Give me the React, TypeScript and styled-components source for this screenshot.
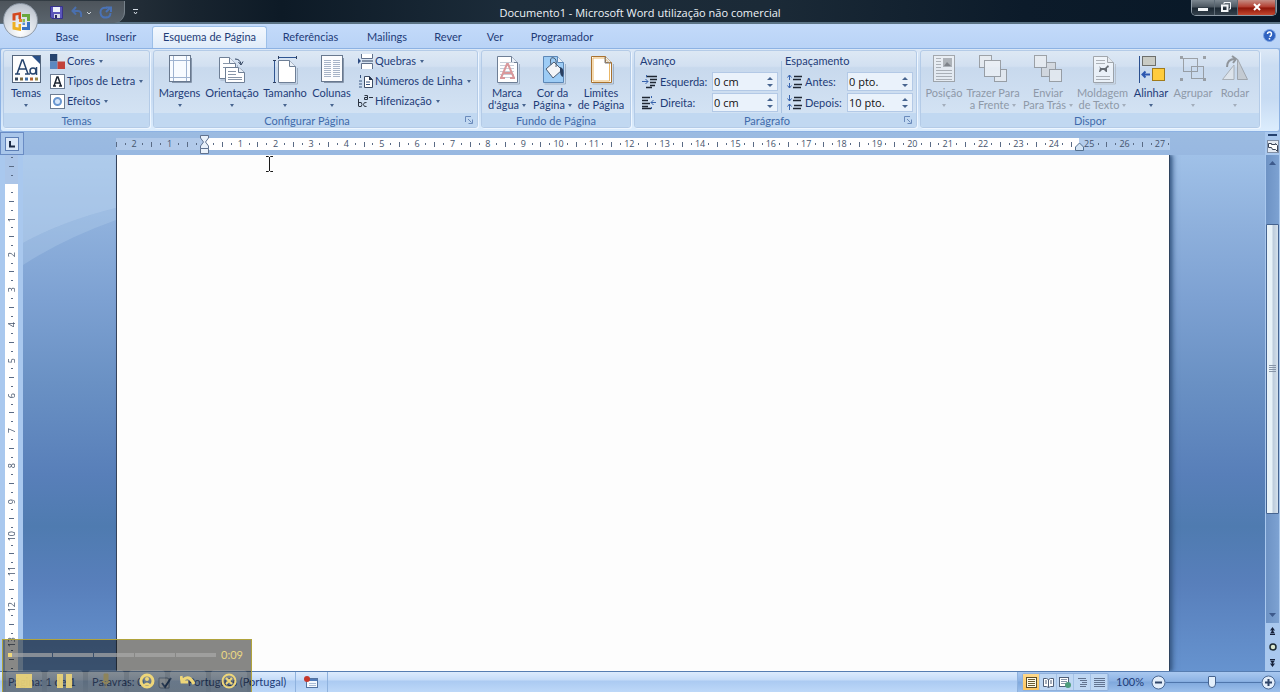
import React from "react";
import styled, { createGlobalStyle, css } from "styled-components";

const Global = createGlobalStyle`
  *, *::before, *::after { box-sizing: border-box; }
  body { margin: 0; font-family: Lato, "Open Sans", sans-serif; font-size: 11px; line-height: 14px; color: #1e3c78; }
  button, input { font: inherit; color: inherit; }
  button { border: 0; padding: 0; background: none; white-space: nowrap; }
  svg { display: block; flex: none; }
`;

const Shell = styled.div`
  position: relative;
  display: flex;
  flex-direction: column;
  height: 100vh;
  min-height: 400px;
  overflow: hidden;
  background: #9cbbe2;
`;

/* ---------- title bar ---------- */
const TitleBar = styled.header`
  flex: none;
  display: grid;
  grid-template-columns: 1fr auto 1fr;
  height: 24px;
  background: linear-gradient(90deg, #3b434a 0, #18242f 15%, #0d1a26 22%, #1c2c3a 40%, #1b2a37 60%, #0c1b2a 80%, #081827);
  border-bottom: 2px solid #5b7385;
`;
const TitleLeft = styled.div`
  display: flex;
  align-items: center;
  gap: 8px;
`;
const QuickBar = styled.div`
  display: flex;
  align-items: center;
  gap: 6px;
  width: 125px;
  height: 22px;
  padding-left: 50px;
  border-radius: 0 0 11px 0;
  background: linear-gradient(#4d545b, #5a646d);
  border-right: 1px solid #77828b;
`;
const Title = styled.h1`
  margin: 0;
  padding-top: 2px;
  font-family: "Open Sans", "Noto Sans", sans-serif;
  font-size: 11px;
  line-height: 22px;
  font-weight: 400;
  color: #eef3f8;
  white-space: nowrap;
`;
const WindowButtons = styled.div`
  justify-self: end;
  display: flex;
  height: 16px;
  margin-right: 3px;
  border: 1px solid #8e9ba6;
  border-top: 0;
  border-radius: 0 0 5px 5px;
  overflow: hidden;
`;
const WindowButton = styled.button<{ $close?: boolean }>`
  display: flex;
  align-items: center;
  justify-content: center;
  width: ${(p) => (p.$close ? 38 : 23)}px;
  padding-bottom: 2px;
  border-right: 1px solid #5d6a75;
  background: ${(p) =>
    p.$close
      ? "linear-gradient(#c58d84, #b23a2c 48%, #8c1408 52%, #c4482f)"
      : "linear-gradient(#7c8790, #4a555f 48%, #1b2732 52%, #35424d)"};
`;
const OfficeButton = styled.button`
  position: absolute;
  left: 3px;
  top: 3px;
  z-index: 2;
  display: flex;
  align-items: center;
  justify-content: center;
  width: 35px;
  height: 35px;
  border-radius: 50%;
  border: 1px solid #8d98a5;
  background: radial-gradient(circle at 50% 85%, #ffffff, #d4dae2 55%, #aab2bd);
`;

/* ---------- tabs ---------- */
const TabRow = styled.nav`
  flex: none;
  display: flex;
  align-items: flex-end;
  height: 24px;
  padding-left: 40px;
  background: linear-gradient(#c3dafa, #b9d3f6);
`;
const Tab = styled.button<{ $w: number; $active?: boolean }>`
  width: ${(p) => p.$w}px;
  height: 22px;
  padding-bottom: 1px;
  ${(p) =>
    p.$active &&
    css`
      margin-left: 4px;
      margin-right: 1px;
      border: 1px solid #9cbfe8;
      border-bottom: 0;
      border-radius: 3px 3px 0 0;
      background: linear-gradient(#f3f8fe, #dfebf9);
    `}
`;
const HelpButton = styled.button`
  margin: 0 4px 6px auto;
`;

/* ---------- ribbon ---------- */
const Ribbon = styled.div`
  flex: none;
  display: flex;
  gap: 3px;
  height: 84px;
  padding: 1px 2px 3px;
  border: 1px solid #8db2e3;
  border-radius: 3px;
  background: linear-gradient(#dce8f6 0, #cbddf2 20%, #c7dbf3 60%, #dcedfd);
`;
const GroupBox = styled.section<{ $w: number }>`
  flex: none;
  display: flex;
  flex-direction: column;
  width: ${(p) => p.$w}px;
  border: 1px solid #b4cbe7;
  border-radius: 3px;
  box-shadow: 1px 1px 0 #eef6ff;
  background: linear-gradient(#dde8f4 0, #d2e0f1 20%, #c8d9ed 22%, #d6e5f5);
  overflow: hidden;
`;
const GroupBody = styled.div`
  flex: 1;
  display: flex;
  min-height: 0;
  padding: 0 2px;
`;
const GroupTitle = styled.h2<{ $launcher?: boolean }>`
  position: relative;
  flex: none;
  margin: 0;
  height: 14px;
  padding-right: ${(p) => (p.$launcher ? 17 : 0)}px;
  font-size: 11px;
  line-height: 15px;
  font-weight: 400;
  text-align: center;
  color: #3f6bab;
  background: #c1d8f1;
`;
const Launcher = styled.button`
  position: absolute;
  right: 4px;
  top: 3px;
`;
const BigBtn = styled.button<{ $w: number; $off?: boolean }>`
  display: flex;
  flex-direction: column;
  align-items: center;
  width: ${(p) => p.$w}px;
  color: ${(p) => (p.$off ? "#8e99a8" : "inherit")};
  line-height: 12px;
`;
const IconBox = styled.span<{ $off?: boolean }>`
  display: block;
  margin: 2px 0;
  filter: ${(p) => (p.$off ? "grayscale(1)" : "none")};
  opacity: ${(p) => (p.$off ? 0.6 : 1)};
`;
const BtnLine = styled.span`
  display: flex;
  align-items: center;
  justify-content: center;
  gap: 3px;
  height: 12px;
`;
const SmallList = styled.div`
  display: flex;
  flex-direction: column;
  padding-left: 4px;
`;
const SmallBtn = styled.button`
  display: flex;
  align-items: center;
  gap: 2px;
  height: 20px;
`;
const Arrow = styled.i<{ $off?: boolean; $up?: boolean }>`
  flex: none;
  width: 0;
  height: 0;
  border: 2px solid transparent;
  ${(p) => (p.$up ? "border-bottom" : "border-top")}: 3px solid ${(p) => (p.$off ? "#a3aebc" : "#47648f")};
  ${(p) => (p.$up ? "border-top" : "border-bottom")}: 0;
`;
const SmallArrow = styled(Arrow)`
  margin-left: 2px;
`;
const FieldSet = styled.fieldset<{ $w: number; $line?: boolean }>`
  flex: none;
  width: ${(p) => p.$w}px;
  margin: 0 ${(p) => (p.$line ? 0 : 2)}px 0 0;
  padding: 0 1px 0 3px;
  border: 0;
  border-left: ${(p) => (p.$line ? "1px solid #a9c2e0" : "0")};
`;
const Legend = styled.legend`
  display: block;
  padding: 0;
  height: 20px;
  line-height: 20px;
`;
const Field = styled.div`
  display: flex;
  align-items: center;
  gap: 3px;
  height: 21px;
  padding-left: 2px;
`;
const FieldLabel = styled.label`
  flex: 1;
  white-space: nowrap;
`;
const Spin = styled.span`
  display: flex;
  width: 66px;
  height: 19px;
  border: 1px solid #b3c9e6;
  background: #eaf2fb;
`;
const SpinInput = styled.input`
  flex: 1;
  min-width: 0;
  width: 0;
  padding: 0 0 0 1px;
  border: 0;
  background: transparent;
  font-family: "Open Sans", "Noto Sans", sans-serif;
  color: #111;
  outline: 0;
`;
const SpinButtons = styled.span`
  display: flex;
  flex-direction: column;
  justify-content: center;
  gap: 4px;
  width: 14px;
`;
const SpinButton = styled.button`
  display: flex;
  justify-content: center;
`;
const SpinArrow = styled(Arrow)`
  border-left-width: 3px;
  border-right-width: 3px;
`;

/* ---------- work area ---------- */
const Main = styled.main`
  flex: 1;
  display: flex;
  min-height: 0;
`;
const Work = styled.div`
  flex: 1;
  min-width: 0;
  display: flex;
  flex-direction: column;
`;
const RulerRow = styled.div`
  flex: none;
  display: flex;
  align-items: flex-start;
  height: 23px;
  padding-right: 95px;
  background: linear-gradient(#9bbbe1, #98b8e1);
`;
const TabStop = styled.button`
  display: flex;
  align-items: center;
  justify-content: center;
  flex: none;
  width: 24px;
  height: 23px;
  margin-right: 92px;
  border: 1px solid #6a8cc4;
  background: #a9c6ea;
`;
const Ruler = styled.div`
  position: relative;
  flex: 1;
  display: flex;
  height: 12px;
  margin-top: 6px;
  background: linear-gradient(90deg, #b2caea 8.4%, #fff 8.4% 91.4%, #b4cdec 91.4%);
`;
const RulerCells = styled.div`
  flex: 1;
  display: flex;
  margin: 0 -4px;
  font-family: "Open Sans", "Noto Sans", sans-serif;
  font-size: 9px;
  line-height: 12px;
  color: #44546c;
`;
const Cell = styled.span`
  flex: 1 1 0;
  width: 0;
  display: flex;
  align-items: center;
  justify-content: center;
`;
const Tick = styled.i`
  flex: none;
  width: 1px;
  height: 5px;
  background: #5a6b85;
`;
const Dot = styled.i`
  flex: none;
  width: 1px;
  height: 2px;
  background: #5a6b85;
`;
const IndentMark = styled.div<{ $at: number; $top: number }>`
  position: absolute;
  left: ${(p) => p.$at}%;
  top: ${(p) => p.$top}px;
  margin-left: -5px;
`;
const Canvas = styled.div`
  position: relative;
  flex: 1;
  display: flex;
  min-height: 0;
  padding-right: 96px;
  overflow: hidden;
  background: linear-gradient(#a0c1e8 0, #8eb0dc 14%, #7da1d2 28%, #6a91c4 44%, #587fb9 62%, #4f7bb0 72%, #587fbb 83%, #6693cf 100%);
`;
const SideRuler = styled.div`
  flex: none;
  display: flex;
  width: 23px;
  padding: 0 5px;
  background: #a9c8ee;
  overflow: hidden;
`;
const SideCells = styled.div`
  flex: 1;
  display: flex;
  flex-direction: column;
  margin: -2px 0;
  font-family: "Open Sans", "Noto Sans", sans-serif;
  font-size: 9px;
  line-height: 12px;
  color: #44546c;
  background: linear-gradient(#abc5e8 0 31px, #fff 31px);
`;
const SideCell = styled.span`
  flex: 1 1 0;
  height: 0;
  display: flex;
  align-items: center;
  justify-content: center;
  writing-mode: vertical-rl;
`;
const SideText = styled.span`
  writing-mode: vertical-rl;
  rotate: 180deg;
`;
const SideTick = styled.i`
  width: 5px;
  height: 1px;
  background: #5a6b85;
`;
const SideDot = styled.i`
  width: 2px;
  height: 1px;
  background: #5a6b85;
`;
const Swoosh = styled.div`
  flex: none;
  width: 93px;
`;
const Page = styled.article`
  flex: 1;
  background: #fdfdfd;
  border-left: 1px solid #35445c;
  box-shadow: 1px 0 0 #2e435f, 3px 0 3px #34557fcc, 5px 0 5px #3a609080;
`;
const TextCursor = styled.div`
  padding: 1px 0 0 148px;
`;
const ScrollColumn = styled.div`
  flex: none;
  display: flex;
  flex-direction: column;
  align-items: center;
  width: 15px;
  background: #a9c8ee;
`;
const SplitHandle = styled.button`
  width: 9px;
  height: 2px;
  margin: 2px 0 4px;
  background: #24416f;
`;
const RulerToggle = styled.button`
  width: 12px;
  height: 13px;
  margin-bottom: 2px;
`;
const Track = styled.div`
  flex: 1;
  display: flex;
  flex-direction: column;
  align-items: center;
  width: 13px;
  background: linear-gradient(90deg, #6d92c4, #7da2d2);
`;
const TrackSpace = styled.span<{ $grow: number }>`
  flex: ${(p) => p.$grow} 1 0;
`;
const Thumb = styled.div`
  flex: 290 1 0;
  display: flex;
  align-items: center;
  justify-content: center;
  width: 13px;
  border: 1px solid #45638f;
  border-radius: 1px;
  background: linear-gradient(90deg, #e8f2f8 0 45%, #bccbdb 55%, #d5e1ec);
`;
const ScrollButton = styled.button`
  display: flex;
  align-items: center;
  justify-content: center;
  width: 13px;
  height: 16px;
`;

/* ---------- status bar ---------- */
const StatusBar = styled.footer`
  flex: none;
  display: flex;
  align-items: center;
  height: 21px;
  border-top: 1px solid #567db1;
  background: linear-gradient(#dcebfd 0, #c4dbf8 40%, #abcaf2 45%, #bdd8f8);
  white-space: nowrap;
`;
const StatusItem = styled.span<{ $w: number }>`
  width: ${(p) => p.$w}px;
  padding-left: 8px;
`;
const StatusIcon = styled.button`
  display: flex;
  align-items: center;
  justify-content: center;
  width: 33px;
  height: 20px;
  border-left: 1px solid #8fb2de;
  border-right: 1px solid #8fb2de;
`;
const StatusRight = styled.div`
  display: flex;
  align-items: center;
  margin-left: auto;
  height: 20px;
  padding: 0 4px;
  border-left: 1px solid #8fb2de;
  background: linear-gradient(#a9c8f0, #8db3e4 45%, #7fa8dd 50%, #9cc0ec);
`;
const Views = styled.div`
  display: flex;
  border: 1px solid #8fb0dc;
  border-radius: 2px;
  background: #bfd7f3;
`;
const ViewButton = styled.button<{ $on?: boolean }>`
  display: flex;
  align-items: center;
  justify-content: center;
  width: 17px;
  height: 16px;
  border-right: 1px solid #a3c1e6;
  background: ${(p) => (p.$on ? "linear-gradient(#ffd98a, #fbc560)" : "none")};
`;
const Percent = styled.output`
  width: 42px;
  text-align: center;
`;
const RoundButton = styled.button`
  width: 15px;
  height: 15px;
`;
const Zoom = styled.input`
  appearance: none;
  width: 95px;
  height: 14px;
  margin: 0;
  background: linear-gradient(#4f76ac, #4f76ac) center / 100% 1px no-repeat;
  &::-webkit-slider-thumb {
    appearance: none;
    width: 8px;
    height: 12px;
    border: 1px solid #45638f;
    border-radius: 1px 1px 4px 4px;
    background: #e3effb;
  }
`;

/* ---------- recorder overlay ---------- */
const Recorder = styled.aside`
  position: absolute;
  left: 2px;
  bottom: 0;
  display: flex;
  flex-direction: column;
  width: 250px;
  height: 53px;
  border: 1px solid #b0a33c;
  border-bottom: 0;
  background: #0a0a067c;
  overflow: hidden;
`;
const RecorderTime = styled.div`
  display: flex;
  align-items: center;
  gap: 5px;
  height: 30px;
  padding: 0 8px 0 5px;
  color: #ead883;
`;
const Progress = styled.div`
  flex: 1;
  display: flex;
  gap: 1px;
  border-left: 4px solid #f0d87c;
`;
const ProgressPart = styled.i`
  flex: 1;
  height: 4px;
  background: #aaaaa9b0;
`;
const RecorderButtons = styled.div`
  display: flex;
  gap: 5px;
  padding-left: 3px;
`;
const RecorderButton = styled.button`
  display: flex;
  align-items: center;
  justify-content: center;
  width: 36px;
  height: 22px;
  border-radius: 4px 4px 0 0;
  background: linear-gradient(#c5d0dc30, #c5d0dc08);
`;

/* ---------- drawings ---------- */
const Ico = ({ w = 32, h = 32, children }: { w?: number; h?: number; children: React.ReactNode }) => (
  <svg width={w} height={h} viewBox={`0 0 ${w} ${h}`} fill="none" aria-hidden="true">
    {children}
  </svg>
);
const Lines = ({ x, y, w, n, c = "#8795a8", step = 3 }: { x: number; y: number; w: number; n: number; c?: string; step?: number }) => (
  <path d={Array.from({ length: n }, (_, i) => `M${x} ${y + i * step + 0.5}h${w}`).join("")} stroke={c} />
);
const Sheet = ({ x = 6, y = 3, w = 21, h = 27, f = "#fff", c = "#6e7f96" }) => (
  <>
    <path d={`M${x + 1.5} ${y + h + 1}h${w}V${y + 8}`} stroke="#8494a9" strokeOpacity=".6" />
    <path d={`M${x + 0.5} ${y + 0.5}h${w - 7}l6 6v${h - 7}h-${w - 1}z`} fill={f} stroke={c} />
    <path d={`M${x + w - 6.5} ${y + 0.5}v6h6`} fill="#e9f0f8" stroke={c} />
  </>
);

const themes = (
  <Ico>
    <rect x="2.5" y="2.5" width="28" height="27" fill="#fdfdfd" stroke="#54657c" />
    <path d="M22 3h8v8z" fill="#284f87" />
    <path d="M7 21 12 7h1l5 14M9 16h7M5 21h5M15 21h5" stroke="#26446e" strokeWidth="1.500" />
    <circle cx="23" cy="18" r="3" stroke="#26446e" strokeWidth="1.500" />
    <path d="M26.500 14v8" stroke="#26446e" strokeWidth="1.500" />
    <path d="M5 26h3" stroke="#35475c" strokeWidth="3" />
    <path d="M10 26h3" stroke="#7d6a3f" strokeWidth="3" />
    <path d="M15 26h3" stroke="#3f6ea5" strokeWidth="3" />
    <path d="M20 26h3" stroke="#b6622e" strokeWidth="3" />
    <path d="M25 26h3" stroke="#98894a" strokeWidth="3" />
  </Ico>
);
const margins = (
  <Ico>
    <rect x="5.5" y="2.500" width="21" height="26" fill="#f8fbff" stroke="#68788e" />
    <path d="M27.500 5v24.500H8" stroke="#8696ab" />
    <path d="M9.500 3v25M22.500 3v25M6 7.500h20M6 24.500h20" stroke="#9fb3d0" />
  </Ico>
);
const orientation = (
  <Ico>
    <Sheet x={3} y={4} w={17} h={22} />
    <path d="M7 10.500h7M7 14.500h7" stroke="#8795a8" />
    <path d="M9.500 14.500h13l6 5v10h-19z" fill="#fff" stroke="#6e7f96" />
    <path d="M22.500 14.500v5h6" stroke="#6e7f96" fill="#e9f0f8" />
    <path d="M12 18.500h8M12 21.500h8M12 24.500h14M12 26.500h14" stroke="#8795a8" />
    <path d="M19 6q5 0 6 5M22.500 9l2.500 3 2-3.500" stroke="#31435f" />
  </Ico>
);
const size = (
  <Ico>
    <Sheet x={9} y={7} w={18} h={23} />
    <path d="M9 4.500h19M5.500 7v23" stroke="#2f5591" />
    <path d="M9.500 3v3M27.500 3v3M4 7.500h3M4 29.500h3" stroke="#2f4060" />
  </Ico>
);
const columns = (
  <Ico>
    <rect x="5.500" y="2.500" width="21" height="26" fill="#fbfcfe" stroke="#68788e" />
    <path d="M27.500 5v24.500H8" stroke="#8696ab" />
    <Lines x={8} y={7} w={7} n={9} c="#a7b4c8" step={2} />
    <Lines x={17} y={7} w={7} n={9} c="#a7b4c8" step={2} />
  </Ico>
);
const watermark = (
  <Ico>
    <Sheet />
    <Lines x={9} y={9} w={14} n={6} c="#c8ced8" />
    <path d="m10 25 6-14h1l6 14M12 20h8M9 25h5M19 25h5" stroke="#d9989b" strokeWidth="2" />
  </Ico>
);
const pageColor = (
  <Ico>
    <Sheet f="#9dccf5" c="#5c87b6" />
    <path d="m9 16 8-7 8 8-9 8z" fill="#f3f5f8" stroke="#4b5d74" />
    <path d="M14 12q-2-9 3-7 3 1 2 9" stroke="#4b5d74" />
    <path d="M23 14q5 1 3 10-3-1-3-6z" fill="#2a3f60" />
  </Ico>
);
const borders = (
  <Ico>
    <Sheet c="#a9722f" />
    <path d="M8 5h11.500l5 5V28H8z" stroke="#eab766" />
    <path d="M20 4v6h6" stroke="#7b7c82" />
  </Ico>
);
const position = (
  <Ico>
    <rect x="5.500" y="2.500" width="21" height="26" fill="#f3f5f8" stroke="#75818f" />
    <rect x="15" y="5" width="9" height="9" fill="#8d959f" />
    <path d="m16 13 3-4 4 4z" fill="#3f4750" />
    <Lines x={8} y={5} w={5} n={4} />
    <Lines x={8} y={17} w={16} n={4} />
  </Ico>
);
const Box = ({ x, y, s, f = "#edf0f4" }: { x: number; y: number; s: number; f?: string }) => (
  <rect x={x + 0.5} y={y + 0.5} width={s} height={s} fill={f} stroke="#6b7685" />
);
const front = (
  <Ico>
    <Box x={2} y={2} s={12} />
    <Box x={17} y={16} s={12} />
    <Box x={7} y={7} s={16} f="#f7f8fa" />
  </Ico>
);
const back = (
  <Ico>
    <Box x={9} y={9} s={14} f="#cfd6df" />
    <Box x={2} y={2} s={12} />
    <Box x={17} y={16} s={12} />
  </Ico>
);
const wrap = (
  <Ico>
    <Sheet />
    <Lines x={9} y={7} w={9} n={2} />
    <Lines x={9} y={23} w={14} n={2} />
    <path d="m12 13 2 2h4l3-3 1 2-2 1v4h-1l-2-2h-2l-2 2h-1l1-4z" fill="#1e2228" />
  </Ico>
);
const align = (
  <Ico>
    <path d="M4.500 3v27" stroke="#2a4f8f" />
    <rect x="7.500" y="3.500" width="13" height="9" fill="#c9cbc4" stroke="#6d6f6c" />
    <rect x="17.500" y="15.500" width="12" height="12" fill="#ffcc3c" stroke="#a17b1a" />
    <path d="M15 21.500H8M10.500 18.500l-3 3 3 3" stroke="#2c57b0" strokeWidth="2" />
  </Ico>
);
const group = (
  <Ico>
    <rect x="6.500" y="5.500" width="14" height="13" stroke="#6b7685" />
    <rect x="14.500" y="13.500" width="12" height="12" stroke="#6b7685" />
    <path d="M3 3h3v3H3zM26 3h3v3h-3zM3 25h3v3H3zM26 25h3v3h-3z" fill="#6b7685" />
  </Ico>
);
const rotate = (
  <Ico>
    <path d="M15 26.500H3.500L15 12z" fill="#e6eaef" stroke="#8a94a1" />
    <path d="M18.500 26.500V6l10 20.500z" fill="#b9c1cb" stroke="#76818f" />
    <path d="M8 14q0-8 8-8M13 3l4 3-3 4" stroke="#59636f" strokeWidth="2" />
  </Ico>
);
const colorsIcon = (
  <Ico w={15} h={15}>
    <path d="M0 0h7.500v7.500H0z" fill="#26446f" />
    <path d="M7.500 0H15v7.500H7.500z" fill="#dbe5f0" />
    <path d="M0 7.500h7.500V15H0z" fill="#5b88c0" />
    <path d="M7.500 7.500H15V15H7.500z" fill="#c2423a" />
  </Ico>
);
const fontsIcon = (
  <Ico w={15} h={15}>
    <rect x=".5" y=".5" width="14" height="14" fill="#fff" stroke="#6c7d94" />
    <path d="m4 12 3-9h1l3 9M5 9h5M3 12h3M9 12h3" stroke="#1c2430" strokeWidth="1.500" />
  </Ico>
);
const effectsIcon = (
  <Ico w={15} h={15}>
    <rect x=".5" y=".5" width="14" height="14" fill="#fff" stroke="#6c7d94" />
    <circle cx="7.500" cy="7.500" r="3.500" fill="#d5e6fa" stroke="#6a97d0" strokeWidth="2" />
  </Ico>
);
const breaksIcon = (
  <Ico w={15} h={15}>
    <path d="M3.500 0v4.500h11V0M3.500 15V9.500h11V15" fill="#fff" stroke="#60708a" />
    <path d="M4 7h11" stroke="#2c3e5c" />
    <path d="m0 4 3 3-3 3z" fill="#2c4a80" />
  </Ico>
);
const lineNumIcon = (
  <Ico w={15} h={15}>
    <path d="M6.500 2.500h5l3 3v8h-8z" fill="#fff" stroke="#3d4d66" />
    <path d="M11 2v4h4" fill="#26334a" />
    <path d="M2.500 1v3M1 7h3M1 10h3M1 13h3M8 8h4M8 10.500h4" stroke="#37547f" />
  </Ico>
);
const hyphenIcon = (
  <Ico w={15} h={15}>
    <path d="M.5 5v7.500M1 8.500q3-1 3 2t-3 2M8.500 8.500q-3-.5-3 2t3 2" stroke="#2b3442" />
    <path d="M6.500 1.500h3v4h-3v-2h3M11 3.500h4" stroke="#2b3442" />
  </Ico>
);
const indentIcon = (right: boolean) => (
  <Ico w={15} h={15}>
    {right ? (
      <>
        <path d="M0 2.500h8M0 5.500h6M0 8.500h8M0 11.500h6M0 13.500h9" stroke="#1f2733" strokeWidth="1.500" />
        <path d="M14 7.500H9M11.500 5 9 7.500l2.500 2.500M9.500 1v2M9.500 12v2" stroke="#3763ad" />
      </>
    ) : (
      <>
        <path d="M4 2.500h11M8 5.500h7M8 8.500h6M8 11.500h5M4 13.500h6" stroke="#1f2733" strokeWidth="1.500" />
        <path d="M0 7.500h6M3.500 5 6 7.500 3.500 10M4.500 1v2" stroke="#3763ad" />
      </>
    )}
  </Ico>
);
const spacingIcon = (after: boolean) => (
  <Ico w={15} h={15}>
    <path d="M7 2.500h8M6 5.500h8M7 10.500h8M6 13.500h8" stroke="#1f2733" strokeWidth="1.500" />
    <path
      d={after ? "M2.500 0v6M.5 3.500l2 2.500 2-2.500M2.500 15V9M.5 11.500l2-2.500 2 2.500" : "M2.500 1v5M.5 3.500l2-2.500 2 2.500M2.500 9v5M.5 11.500l2 2.500 2-2.500"}
      stroke="#3763ad"
    />
  </Ico>
);

/* ---------- pieces ---------- */
type BigProps = { icon: React.ReactNode; lines: string[]; w: number; off?: boolean; noArrow?: boolean };
const Big = ({ icon, lines, w, off, noArrow }: BigProps) => (
  <BigBtn $w={w} $off={off} disabled={off}>
    <IconBox $off={off}>{icon}</IconBox>
    {lines.map((line, i) => (
      <BtnLine key={line}>
        {line}
        {i === 1 && !noArrow && <Arrow $off={off} />}
      </BtnLine>
    ))}
    {lines.length === 1 && (
      <BtnLine>
        <Arrow $off={off} />
      </BtnLine>
    )}
  </BigBtn>
);
const Small = ({ icon, text }: { icon: React.ReactNode; text: string }) => (
  <SmallBtn>
    {icon}
    {text}
    <SmallArrow />
  </SmallBtn>
);
const Group = ({ title, w, launcher, children }: { title: string; w: number; launcher?: boolean; children: React.ReactNode }) => (
  <GroupBox $w={w}>
    <GroupBody>{children}</GroupBody>
    <GroupTitle $launcher={launcher}>
      {title}
      {launcher && (
        <Launcher aria-label={`Opções de ${title}`}>
          <Ico w={8} h={8}>
            <path d="M.5 6V.5H6M3 3l3.500 3.500M7.500 3.500v4h-4" stroke="#6a8abb" />
          </Ico>
        </Launcher>
      )}
    </GroupTitle>
  </GroupBox>
);
const NumberField = ({ id, label, value, icon }: { id: string; label: string; value: string; icon: React.ReactNode }) => (
  <Field>
    {icon}
    <FieldLabel htmlFor={id}>{label}</FieldLabel>
    <Spin>
      <SpinInput id={id} defaultValue={value} />
      <SpinButtons>
        <SpinButton aria-label="Aumentar"><SpinArrow $up /></SpinButton>
        <SpinButton aria-label="Diminuir"><SpinArrow /></SpinButton>
      </SpinButtons>
    </Spin>
  </Field>
);

const quarters = (from: number, to: number) => Array.from({ length: to - from + 1 }, (_, i) => from + i);

const TABS = [
  { t: "Base", w: 54 },
  { t: "Inserir", w: 54 },
  { t: "Esquema de Página", w: 115 },
  { t: "Referências", w: 85 },
  { t: "Mailings", w: 68 },
  { t: "Rever", w: 54 },
  { t: "Ver", w: 40 },
  { t: "Programador", w: 94 },
];

export default function App() {
  return (
    <Shell>
      <Global />
      <TitleBar>
        <TitleLeft>
          <QuickBar>
            <button aria-label="Guardar">
              <Ico w={13} h={13}>
                <path d="M.5.5h12v12H2l-1.500-1.500z" fill="#5b55ba" stroke="#37328a" />
                <path d="M3 1h7v5H3z" fill="#eef1fb" />
                <path d="M4 8h6v4H4z" fill="#d8dbe8" />
                <path d="M5 9h2v3H5z" fill="#2d2a60" />
              </Ico>
            </button>
            <button aria-label="Anular">
              <Ico w={24} h={13}>
                <path d="M4 5h5q4 0 3 6M7 1 3.500 5 7 8.500" stroke="#4a6fae" strokeWidth="2" />
                <path d="m18 6 2 2 2-2" stroke="#cdd5dd" />
              </Ico>
            </button>
            <button aria-label="Repetir">
              <Ico w={13} h={13}>
                <path d="M8 2Q1 1 1.500 7t8 4q2-1 2-4M7 6l4.500-4.500M7 1.500h5V6" stroke="#4a72b5" strokeWidth="2" />
              </Ico>
            </button>
          </QuickBar>
          <button aria-label="Personalizar">
            <Ico w={7} h={7}>
              <path d="M0 .5h5M1 3l1.500 2L4 3" stroke="#d5dde5" />
            </Ico>
          </button>
        </TitleLeft>
        <Title>Documento1 - Microsoft Word utilização não comercial</Title>
        <WindowButtons>
          <WindowButton aria-label="Minimizar">
            <Ico w={12} h={12}><path d="M1 7h10v3H1z" fill="#f2f5f7" /></Ico>
          </WindowButton>
          <WindowButton aria-label="Restaurar">
            <Ico w={12} h={12}>
              <path d="M4 3V1.500h6.500V8H9" stroke="#f2f5f7" />
              <path d="M2 4.500h5.500V10H2z" stroke="#f2f5f7" strokeWidth="2" />
            </Ico>
          </WindowButton>
          <WindowButton $close aria-label="Fechar">
            <Ico w={12} h={12}><path d="m3 3 6 6M9 3 3 9" stroke="#fff" strokeWidth="2" /></Ico>
          </WindowButton>
        </WindowButtons>
      </TitleBar>
      <OfficeButton aria-label="Botão do Office">
        <Ico w={24} h={24}>
          <path d="M3.500 4.500 12 3v7H9.500V6l-3 .5v5h-3z" fill="#d4491f" />
          <path d="M13 5h8v7h-3V8h-5z" fill="#6aa83c" />
          <path d="M3.500 13h3v5l3 .5V15H12v7l-8.500-1.500z" fill="#eeb022" />
          <path d="M18 13h3v8h-8v-3h5z" fill="#3a72c4" />
          <path d="M10 10h3v3h-3z" fill="#e8842a" />
          <path d="M13.500 10H16v3h-2.500z" fill="#8fbf4d" />
          <path d="M13.500 13.500H16V16h-2.500z" fill="#5c90d8" />
        </Ico>
      </OfficeButton>

      <TabRow>
        {TABS.map(({ t, w }) => (
          <Tab key={t} $w={w} $active={t === "Esquema de Página"}>{t}</Tab>
        ))}
        <HelpButton aria-label="Ajuda">
          <Ico w={13} h={13}>
            <circle cx="6.500" cy="6.500" r="6" fill="#2f62c0" stroke="#7ba1e0" />
            <path d="M4.500 5Q4.500 3 6.500 3t2 2-2 2.500M6.500 9v1.500" stroke="#fff" strokeWidth="1.500" />
          </Ico>
        </HelpButton>
      </TabRow>

      <Ribbon>
        <Group title="Temas" w={147}>
          <Big icon={themes} lines={["Temas"]} w={40} />
          <SmallList>
            <Small icon={colorsIcon} text="Cores" />
            <Small icon={fontsIcon} text="Tipos de Letra" />
            <Small icon={effectsIcon} text="Efeitos" />
          </SmallList>
        </Group>
        <Group title="Configurar Página" w={325} launcher>
          <Big icon={margins} lines={["Margens"]} w={47} />
          <Big icon={orientation} lines={["Orientação"]} w={58} />
          <Big icon={size} lines={["Tamanho"]} w={48} />
          <Big icon={columns} lines={["Colunas"]} w={45} />
          <SmallList>
            <Small icon={breaksIcon} text="Quebras" />
            <Small icon={lineNumIcon} text="Números de Linha" />
            <Small icon={hyphenIcon} text="Hifenização" />
          </SmallList>
        </Group>
        <Group title="Fundo de Página" w={150}>
          <Big icon={watermark} lines={["Marca", "d'água"]} w={46} />
          <Big icon={pageColor} lines={["Cor da", "Página"]} w={45} />
          <Big icon={borders} lines={["Limites", "de Página"]} w={52} noArrow />
        </Group>
        <Group title="Parágrafo" w={283} launcher>
          <FieldSet $w={142}>
            <Legend>Avanço</Legend>
            <NumberField id="left" label="Esquerda:" value="0 cm" icon={indentIcon(false)} />
            <NumberField id="right" label="Direita:" value="0 cm" icon={indentIcon(true)} />
          </FieldSet>
          <FieldSet $w={133} $line>
            <Legend>Espaçamento</Legend>
            <NumberField id="before" label="Antes:" value="0 pto." icon={spacingIcon(false)} />
            <NumberField id="after" label="Depois:" value="10 pto." icon={spacingIcon(true)} />
          </FieldSet>
        </Group>
        <Group title="Dispor" w={340}>
          <Big icon={position} lines={["Posição"]} w={42} off />
          <Big icon={front} lines={["Trazer Para", "a Frente"]} w={56} off />
          <Big icon={back} lines={["Enviar", "Para Trás"]} w={54} off />
          <Big icon={wrap} lines={["Moldagem", "de Texto"]} w={55} off />
          <Big icon={align} lines={["Alinhar"]} w={42} />
          <Big icon={group} lines={["Agrupar"]} w={42} off />
          <Big icon={rotate} lines={["Rodar"]} w={42} off />
        </Group>
      </Ribbon>

      <Main>
        <Work>
          <RulerRow>
            <TabStop aria-label="Tabulação esquerda">
              <Ico w={14} h={14}>
                <rect x=".5" y=".5" width="13" height="13" fill="#dbe8f8" stroke="#5d7fb6" />
                <path d="M5 4v5.500h5" stroke="#1c2b46" strokeWidth="2" />
              </Ico>
            </TabStop>
            <Ruler>
              <RulerCells>
                {quarters(-10, 109).map((q) => (
                  <Cell key={q}>
                    {q === 0 || q === 99 ? null : q % 4 === 0 ? Math.abs(q / 4) : q % 2 === 0 ? <Tick /> : <Dot />}
                  </Cell>
                ))}
              </RulerCells>
              <IndentMark $at={8.4} $top={-3}>
                <Ico w={9} h={19}>
                  <path d="M.5.500h8V3l-3 4 3 4v2.500h-8V11l3-4-3-4z" fill="#e9f1fa" stroke="#60728f" />
                  <path d="M.5 13.500h8v5h-8z" fill="#e9f1fa" stroke="#60728f" />
                </Ico>
              </IndentMark>
              <IndentMark $at={91.5} $top={4}>
                <Ico w={9} h={9}>
                  <path d="M.5 8.500V5l4-4 4 4v3.500z" fill="#d3e4f5" stroke="#54708f" />
                </Ico>
              </IndentMark>
            </Ruler>
          </RulerRow>
          <Canvas>
            <SideRuler>
              <SideCells>
                {quarters(-3, 55).map((q) => (
                  <SideCell key={q}>
                    {q === 0 ? null : q % 4 === 0 ? <SideText>{q / 4}</SideText> : q % 2 === 0 ? <SideTick /> : <SideDot />}
                  </SideCell>
                ))}
              </SideCells>
            </SideRuler>
            <Swoosh>
              <Ico w={93} h={112}>
                <path d="M0 0h93v53Q40 66 0 88z" fill="#b9d3ef" fillOpacity=".55" />
                <path d="M0 88Q40 66 93 53v12Q40 84 0 110z" fill="#b9d3ef" fillOpacity=".3" />
              </Ico>
            </Swoosh>
            <Page>
              <TextCursor>
                <Ico w={9} h={16}>
                  <path d="M1 .5h2.500l1 1 1-1H8M4.500 1v14M1 15.500h2.500l1-1 1 1H8" stroke="#1a1a1a" />
                </Ico>
              </TextCursor>
            </Page>
          </Canvas>
        </Work>
        <ScrollColumn>
          <SplitHandle aria-label="Dividir" />
          <RulerToggle aria-label="Ver régua">
            <Ico w={12} h={13}>
              <rect x=".5" y=".5" width="11" height="12" fill="#e4eaf2" stroke="#7f8ea5" />
              <path d="M1.500 3.500h3v1h4v-1l2 2v6l-2-2h-3l-1-2h-3z" fill="#fff" stroke="#3a4558" />
            </Ico>
          </RulerToggle>
          <Track>
            <ScrollButton aria-label="Subir">
              <Ico w={7} h={4}><path d="M0 4 3.500 0 7 4z" fill="#3d5a8c" /></Ico>
            </ScrollButton>
            <TrackSpace $grow={53} />
            <Thumb>
              <Ico w={7} h={8}><Lines x={0} y={0} w={7} n={4} step={2} /></Ico>
            </Thumb>
            <TrackSpace $grow={94} />
            <ScrollButton aria-label="Descer">
              <Ico w={7} h={4}><path d="M0 0h7L3.500 4z" fill="#3d5a8c" /></Ico>
            </ScrollButton>
          </Track>
          <ScrollButton aria-label="Página anterior">
            <Ico w={7} h={8}><path d="M1 3.500 3.500 0 6 3.500zM1 6.500 3.500 3 6 6.500zM1 7h5v1H1z" fill="#16213a" /></Ico>
          </ScrollButton>
          <ScrollButton aria-label="Procurar objeto">
            <Ico w={8} h={8}><circle cx="4" cy="4" r="3" fill="#d9e6cd" stroke="#1d2b33" strokeWidth="1.500" /></Ico>
          </ScrollButton>
          <ScrollButton aria-label="Página seguinte">
            <Ico w={7} h={8}><path d="M1 0h5v1H1zM1 1.500h5L3.500 5zM1 4.500h5L3.500 8z" fill="#16213a" /></Ico>
          </ScrollButton>
        </ScrollColumn>
      </Main>

      <StatusBar>
        <StatusItem $w={84}>Página: 1 de 1</StatusItem>
        <StatusItem $w={72}>Palavras: 0</StatusItem>
        <Ico w={24} h={15}>
          <path d="M3 3h8q2 0 2 2v8H5q-2 0-2-2z" fill="#dfe8f4" stroke="#7389a8" />
          <path d="m6 8 3 4 6-9" stroke="#2c4f83" strokeWidth="2" />
        </Ico>
        <StatusItem $w={115}>Português (Portugal)</StatusItem>
        <StatusIcon aria-label="Gravar macro">
          <Ico w={15} h={13}>
            <rect x="2.500" y="2.500" width="11" height="9" fill="#f5f9fe" stroke="#54739f" />
            <path d="M3 4h10" stroke="#4f7ab8" strokeWidth="2" />
            <path d="M5 7.500h7M5 9.500h7" stroke="#a9bcd6" />
            <circle cx="3" cy="3" r="3" fill="#c5372b" />
          </Ico>
        </StatusIcon>
        <StatusRight>
          <Views>
            <ViewButton $on aria-label="Esquema de impressão">
              <Ico w={11} h={11}><rect x=".5" y=".5" width="10" height="10" fill="#fffbe8" stroke="#5b4d28" /><Lines x={2} y={2} w={7} n={4} step={2} c="#6b5c33" /></Ico>
            </ViewButton>
            <ViewButton aria-label="Leitura em ecrã inteiro">
              <Ico w={11} h={11}><path d="M.5 1.500h3l2 1 2-1h3v8h-3l-2 1-2-1h-3zM5.500 2.500v8" fill="#fff" stroke="#4f5f78" /><path d="M2 4h2M2 6h2M7 4h2M7 6h2" stroke="#4f5f78" /></Ico>
            </ViewButton>
            <ViewButton aria-label="Esquema Web">
              <Ico w={12} h={11}><rect x=".5" y=".5" width="9" height="9" fill="#fff" stroke="#4f5f78" /><Lines x={2} y={2} w={6} n={3} step={2} /><circle cx="9" cy="8" r="3" fill="#4d9d7c" /></Ico>
            </ViewButton>
            <ViewButton aria-label="Destaques">
              <Ico w={11} h={11}><path d="M1 1.500h8M3 3.500h7M5 5.500h5M3 7.500h7M3 9.500h6" stroke="#62738f" /></Ico>
            </ViewButton>
            <ViewButton aria-label="Rascunho">
              <Ico w={11} h={11}><Lines x={0} y={1} w={11} n={5} step={2} c="#62738f" /></Ico>
            </ViewButton>
          </Views>
          <Percent>100%</Percent>
          <RoundButton aria-label="Reduzir">
            <Ico w={15} h={15}><circle cx="7.500" cy="7.500" r="6.500" fill="#e2edfa" stroke="#4a6893" /><path d="M4 7.500h7" stroke="#2e4468" strokeWidth="2" /></Ico>
          </RoundButton>
          <Zoom type="range" aria-label="Zoom" defaultValue={48} />
          <RoundButton aria-label="Ampliar">
            <Ico w={15} h={15}><circle cx="7.500" cy="7.500" r="6.500" fill="#e2edfa" stroke="#4a6893" /><path d="M4 7.500h7M7.500 4v7" stroke="#2e4468" strokeWidth="2" /></Ico>
          </RoundButton>
        </StatusRight>
      </StatusBar>

      <Recorder>
        <RecorderTime>
          <Progress>
            {[0, 1, 2, 3, 4].map((n) => <ProgressPart key={n} />)}
          </Progress>
          <time>0:09</time>
        </RecorderTime>
        <RecorderButtons>
          <RecorderButton aria-label="Parar">
            <Ico w={16} h={16}><path d="M0 1h16v14H0z" fill="#eed679" fillOpacity=".9" /></Ico>
          </RecorderButton>
          <RecorderButton aria-label="Pausa">
            <Ico w={16} h={16}><path d="M0 1h6v14H0zM9 1h6v14H9z" fill="#eed679" fillOpacity=".9" /></Ico>
          </RecorderButton>
          <RecorderButton aria-label="Microfone">
            <Ico w={16} h={16}><path d="M6 1h4v8H6zM4 8q4 6 8 0M8 11v4" fill="#8e845a" stroke="#8e845a" /></Ico>
          </RecorderButton>
          <RecorderButton aria-label="Câmara">
            <Ico w={16} h={16}><circle cx="8" cy="8" r="6" stroke="#eed679" strokeWidth="3" /><circle cx="8" cy="6" r="2" fill="#eed679" /><path d="M4 12q4-5 8 0z" fill="#eed679" /></Ico>
          </RecorderButton>
          <RecorderButton aria-label="Anular gravação">
            <Ico w={16} h={16}><path d="M3 7q6-6 11 4M1 3l1 6h6" stroke="#eed679" strokeWidth="3" /></Ico>
          </RecorderButton>
          <RecorderButton aria-label="Cancelar">
            <Ico w={16} h={16}><circle cx="8" cy="8" r="6.500" stroke="#eed679" strokeWidth="2" /><path d="m5 5 6 6M11 5l-6 6" stroke="#eed679" strokeWidth="2" /></Ico>
          </RecorderButton>
        </RecorderButtons>
      </Recorder>
    </Shell>
  );
}
